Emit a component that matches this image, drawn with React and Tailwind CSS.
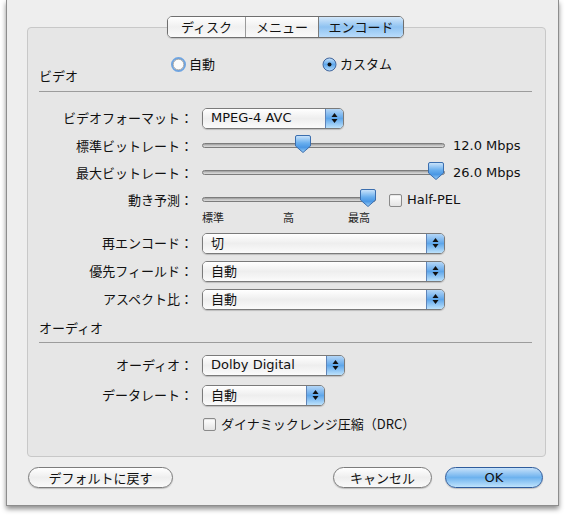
const JP = "font-['Noto_Sans_CJK_JP',sans-serif]"

function Arrows() {
  return (
    <svg width="7" height="12" viewBox="0 0 7 12">
      <path d="M3.5 1 L6.5 5 H0.5 Z" fill="#111" />
      <path d="M0.5 7 H6.5 L3.5 11 Z" fill="#111" />
    </svg>
  )
}

function Popup({ value, jp, className }) {
  return (
    <div
      className={`flex h-[21px] overflow-hidden rounded-[5px] border border-[#7a7a7a] shadow-[0_1px_1px_rgba(0,0,0,0.18)] ${className}`}
    >
      <div
        className={`flex flex-1 items-center bg-gradient-to-b from-[#ffffff] via-[#eeeeee] to-[#fbfbfb] pl-[8px] text-[13px] text-[#111] ${
          jp ? JP : ''
        }`}
      >
        {value}
      </div>
      <div className="flex w-[18px] items-center justify-center border-l border-[#5f84b8] bg-gradient-to-b from-[#b4d6f6] via-[#5ea6ea] to-[#bde2fb]">
        <Arrows />
      </div>
    </div>
  )
}

function Thumb() {
  return (
    <svg width="16" height="18" viewBox="0 0 16 18">
      <defs>
        <linearGradient id="th" x1="0" y1="0" x2="0" y2="1">
          <stop offset="0" stopColor="#cfe6fb" />
          <stop offset="0.45" stopColor="#68aeee" />
          <stop offset="0.7" stopColor="#4a97e4" />
          <stop offset="1" stopColor="#9fd1f8" />
        </linearGradient>
      </defs>
      <path
        d="M2 0.5 H14 Q15.5 0.5 15.5 2 V11 L8 17.5 L0.5 11 V2 Q0.5 0.5 2 0.5 Z"
        fill="url(#th)"
        stroke="#3b6eae"
      />
    </svg>
  )
}

function Slider({ className, pos }) {
  return (
    <div className={`relative h-[22px] ${className}`}>
      <div className="absolute left-0 right-0 top-[8px] h-[5px] rounded-full border border-[#7c7c7c] bg-gradient-to-b from-[#9a9a9a] via-[#c4c4c4] to-[#dcdcdc]" />
      <div className="absolute top-[0px]" style={{ left: pos - 8 }}>
        <Thumb />
      </div>
    </div>
  )
}

function Checkbox({ label, className }) {
  return (
    <div className={`flex items-center gap-[5px] text-[13px] text-[#111] ${className}`}>
      <div className="h-[13px] w-[13px] rounded-[2px] border border-[#8a8a8a] bg-gradient-to-b from-[#ffffff] to-[#e4e4e4] shadow-[inset_0_1px_1px_rgba(0,0,0,0.1)]" />
      <span>{label}</span>
    </div>
  )
}

function Row({ label, className, children }) {
  return (
    <div className={`flex h-[22px] items-center ${className}`}>
      <div className={`w-[165px] whitespace-nowrap text-right text-[13px] text-[#111] ${JP}`}>{label}</div>
      <div className="ml-[9px] flex items-center">{children}</div>
    </div>
  )
}

function Tab({ label, selected, className }) {
  return (
    <div
      className={`flex h-full items-center justify-center text-[13px] text-[#111] ${JP} ${
        selected
          ? 'bg-gradient-to-b from-[#d2e7fa] via-[#8ec2f1] to-[#b9dcfb]'
          : 'bg-gradient-to-b from-[#ffffff] via-[#f0f0f0] to-[#fafafa]'
      } ${className}`}
    >
      {label}
    </div>
  )
}

function Button({ label, blue, className }) {
  return (
    <div
      className={`flex h-[21px] items-center justify-center rounded-full border text-[13px] text-[#111] shadow-[0_1px_1px_rgba(0,0,0,0.2)] ${
        blue
          ? 'border-[#2f5c9c] bg-gradient-to-b from-[#c6e1f9] via-[#6db2ee] to-[#bfe3fc]'
          : `border-[#7c7c7c] bg-gradient-to-b from-[#ffffff] via-[#eeeeee] to-[#fafafa] ${JP}`
      } ${className}`}
    >
      {label}
    </div>
  )
}

export default function App() {
  return (
    <div className="h-[518px] w-[571px] bg-white font-['DejaVu_Sans','Noto_Sans_CJK_JP',sans-serif]">
      <div className="ml-[6px] flex h-[506px] w-[553px] flex-col border-x border-b border-[#8d8d8d] bg-[#eeeeee] pt-[16px] shadow-[0_3px_5px_rgba(0,0,0,0.45)]">
        <div className="relative z-10 ml-[160px] flex h-[22px] w-[237px] overflow-hidden rounded-[5px] border border-[#6f6f6f] shadow-[0_1px_1px_rgba(0,0,0,0.15)]">
          <Tab label="ディスク" className="w-[78px] border-r border-[#9a9a9a]" />
          <Tab label="メニュー" className="w-[73px] border-r border-[#7a7a7a]" />
          <Tab label="エンコード" selected className="flex-1" />
        </div>

        <div className="-mt-[11px] ml-[20px] h-[430px] w-[519px] rounded-[4px] border border-[#c8c8c8] bg-[#e6e6e6]">
          <div className={`mt-[27px] flex h-[29px] pl-[11px] ${JP}`}>
            <div className="w-[132px] self-end text-[13px] leading-[16px] text-[#111]">ビデオ</div>
            <div className="flex h-[18px] items-center gap-[3px] text-[13px] text-[#111]">
              <svg width="15" height="15" viewBox="0 0 15 15">
                <circle cx="7.5" cy="7.5" r="6.5" fill="none" stroke="#6fa5e2" strokeWidth="2" />
                <circle cx="7.5" cy="7.5" r="5.3" fill="#fbfbfb" stroke="#8e8e8e" strokeWidth="0.7" />
              </svg>
              <span>自動</span>
            </div>
            <div className="ml-[107px] flex h-[18px] items-center gap-[3px] text-[13px] text-[#111]">
              <svg width="15" height="15" viewBox="0 0 15 15">
                <defs>
                  <linearGradient id="rb" x1="0" y1="0" x2="0" y2="1">
                    <stop offset="0" stopColor="#c9e3fa" />
                    <stop offset="0.5" stopColor="#5fa8ec" />
                    <stop offset="1" stopColor="#b6dcfb" />
                  </linearGradient>
                </defs>
                <circle cx="7.5" cy="7.5" r="6.5" fill="url(#rb)" stroke="#41659c" strokeWidth="1" />
                <circle cx="7.5" cy="7.5" r="2" fill="#111" />
              </svg>
              <span>カスタム</span>
            </div>
          </div>

          <div className="ml-[11px] mt-[7px] w-[493px] border-t border-[#9c9c9c]" />

          <Row label="ビデオフォーマット：" className="mt-[15px]">
            <Popup value="MPEG-4 AVC" className="w-[142px]" />
          </Row>
          <Row label="標準ビットレート：" className="mt-[6px]">
            <Slider className="w-[243px]" pos={101} />
            <span className="ml-[8px] text-[13px] text-[#111]">12.0 Mbps</span>
          </Row>
          <Row label="最大ビットレート：" className="mt-[5px]">
            <Slider className="w-[243px]" pos={234} />
            <span className="ml-[8px] text-[13px] text-[#111]">26.0 Mbps</span>
          </Row>
          <Row label="動き予測：" className="mt-[5px]">
            <Slider className="w-[174px]" pos={166} />
            <Checkbox label="Half-PEL" className="ml-[13px]" />
          </Row>
          <div className={`ml-[174px] flex h-[12px] items-center text-[11px] text-[#222] ${JP}`}>
            <span>標準</span>
            <span className="ml-[59px]">高</span>
            <span className="ml-[54px]">最高</span>
          </div>
          <Row label="再エンコード：" className="mt-[9px]">
            <Popup value="切" jp className="w-[243px]" />
          </Row>
          <Row label="優先フィールド：" className="mt-[6px]">
            <Popup value="自動" jp className="w-[243px]" />
          </Row>
          <Row label="アスペクト比：" className="mt-[6px]">
            <Popup value="自動" jp className="w-[243px]" />
          </Row>

          <div className={`ml-[11px] mt-[10px] text-[13px] leading-[16px] text-[#111] ${JP}`}>オーディオ</div>
          <div className="ml-[11px] mt-[6px] w-[493px] border-t border-[#9c9c9c]" />

          <Row label="オーディオ：" className="mt-[11px]">
            <Popup value="Dolby Digital" className="w-[143px]" />
          </Row>
          <Row label="データレート：" className="mt-[8px]">
            <Popup value="自動" jp className="w-[123px]" />
          </Row>
          <div className="ml-[175px] mt-[9px] flex h-[18px] items-center">
            <Checkbox label="ダイナミックレンジ圧縮（DRC）" className={JP} />
          </div>
        </div>

        <div className="mt-[10px] flex items-center pl-[21px]">
          <Button label="デフォルトに戻す" className="w-[145px]" />
          <Button label="キャンセル" className="ml-[160px] w-[99px]" />
          <Button label="OK" blue className="ml-[13px] w-[98px]" />
        </div>
      </div>
    </div>
  )
}
